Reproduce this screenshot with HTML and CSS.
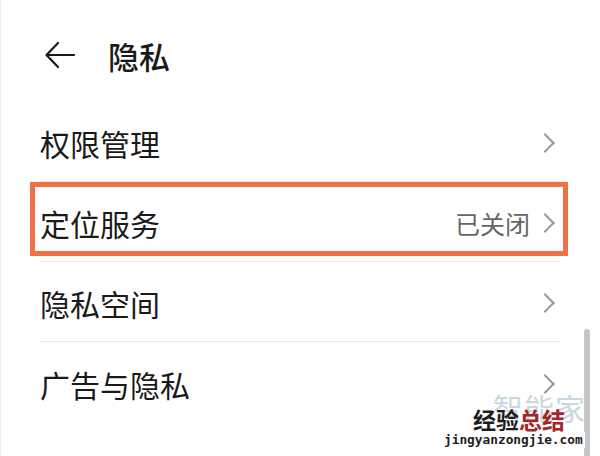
FILE: index.html
```html
<!DOCTYPE html>
<html lang="zh-CN">
<head>
    <meta charset="UTF-8">
    <meta name="viewport" content="width=device-width, initial-scale=1.0">
    <title>隐私</title>
    <link rel="stylesheet" href="styles.css">
</head>
<body>
    <div class="page">
        <div class="header">
            <svg class="back" width="32" height="32" viewBox="0 0 32 32">
                <path d="M30 16H3M14 4L2.5 16L14 28" fill="none" stroke="#1a1a1a" stroke-width="2.2" stroke-linecap="round" stroke-linejoin="round"/>
            </svg>
            <h1 class="title">隐私</h1>
        </div>

        <div class="list">
            <div class="row">
                <span class="label">权限管理</span>
                <span class="chev"></span>
            </div>
            <div class="row">
                <span class="label">定位服务</span>
                <span class="value">已关闭</span>
                <span class="chev"></span>
                <div class="mark"></div>
            </div>
            <div class="row">
                <span class="label">隐私空间</span>
                <span class="chev"></span>
            </div>
            <div class="row last">
                <span class="label">广告与隐私</span>
                <span class="chev"></span>
            </div>
        </div>

        <div class="scrollbar"></div>

        <div class="watermark">
            <div class="wm-back">智能家</div>
            <div class="wm-main">经验<span class="red">总结</span></div>
            <div class="wm-url">jingyanzongjie.com</div>
        </div>
    </div>
</body>
</html>
```

FILE: styles.css
```css
body {
    margin: 0;
    background: #fff;
    font-family: "Noto Sans CJK SC", "Noto Sans", sans-serif;
    color: #1a1a1a;
}

.page {
    position: relative;
    width: 600px;
    height: 456px;
    overflow: hidden;
    border-left: 1px solid #eeeeee;
    box-sizing: border-box;
}

.header {
    height: 102px;
    display: flex;
    align-items: center;
    padding-left: 43px;
    padding-top: 8px;
    box-sizing: border-box;
}

.back {
    display: block;
}

.title {
    margin: 0 0 0 32px;
    font-size: 31px;
    font-weight: 500;
    line-height: 1;
}

.list {
    padding: 0 40px 0 39px;
}

.row {
    position: relative;
    height: 80px;
    display: flex;
    align-items: center;
    border-bottom: 1px solid #e6e6e6;
    box-sizing: border-box;
    padding-top: 3px;
}

.row.last {
    border-bottom: none;
}

.label {
    font-size: 30px;
    line-height: 1;
    flex: 1;
}

.value {
    font-size: 25px;
    color: #666;
    line-height: 1;
    margin-right: 8px;
}

.chev {
    width: 14px;
    height: 14px;
    border-top: 2px solid #999;
    border-right: 2px solid #999;
    transform: rotate(45deg);
    margin-right: 8px;
    box-sizing: border-box;
}

.mark {
    position: absolute;
    left: -10px;
    right: -8px;
    top: 0;
    bottom: 5px;
    border: 5px solid #ef7247;
}

.scrollbar {
    position: absolute;
    left: 583px;
    top: 329px;
    width: 6px;
    height: 140px;
    border-radius: 3px;
    background: #c6c6c6;
}

.watermark {
    position: absolute;
    left: 443px;
    top: 392px;
    width: 142px;
}

.wm-back {
    position: absolute;
    left: 49px;
    top: 0;
    font-size: 30px;
    line-height: 1;
    color: #cbd7de;
    letter-spacing: 1px;
}

.wm-main {
    position: absolute;
    left: 29px;
    top: 16px;
    font-size: 23px;
    font-weight: 700;
    line-height: 1;
    color: #1e1e1e;
}

.red {
    color: #a3262a;
}

.wm-url {
    position: absolute;
    left: 0;
    top: 40px;
    padding-right: 2px;
    background: #fff;
    font-family: "DejaVu Sans Mono", monospace;
    font-size: 12.8px;
    font-weight: 700;
    line-height: 16px;
    color: #1e1e1e;
}
```
